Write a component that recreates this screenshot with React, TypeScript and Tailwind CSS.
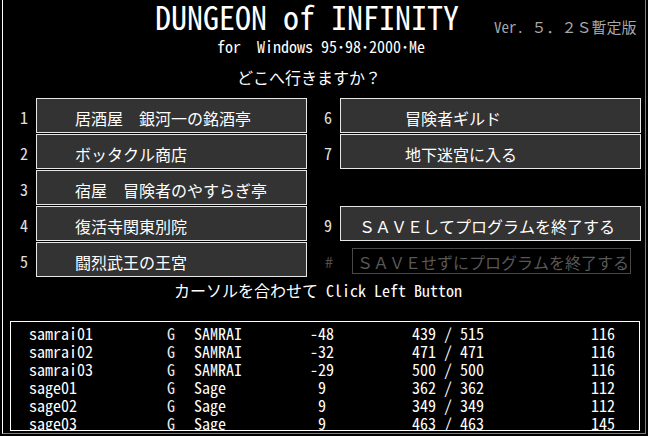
import React from "react";

const rows: { name: string; g: string; cls: string; al: string; hp: string; lv: string }[] = [
  { name: "samrai01", g: "G", cls: "SAMRAI", al: "-48", hp: "439 / 515", lv: "116" },
  { name: "samrai02", g: "G", cls: "SAMRAI", al: "-32", hp: "471 / 471", lv: "116" },
  { name: "samrai03", g: "G", cls: "SAMRAI", al: "-29", hp: "500 / 500", lv: "116" },
  { name: "sage01", g: "G", cls: "Sage", al: " 9", hp: "362 / 362", lv: "112" },
  { name: "sage02", g: "G", cls: "Sage", al: " 9", hp: "349 / 349", lv: "112" },
  { name: "sage03", g: "G", cls: "Sage", al: " 9", hp: "463 / 463", lv: "145" },
];

function Box({ w, pl, label }: { w: string; pl: string; label: string }) {
  return (
    <div
      className={`${w} h-[35px] shrink-0 border border-[#e8e8e8] bg-[#333333] flex items-center`}
    >
      <span className={`${pl} pt-[4px] text-[16px] leading-[16px] text-white whitespace-pre`}>{label}</span>
    </div>
  );
}

function Num({ n, cls = "text-[#e0e0e0]" }: { n: string; cls?: string }) {
  return (
    <span className={`w-[16px] shrink-0 flex items-center text-[16px] leading-[16px] pt-[2px] ${cls}`}>{n}</span>
  );
}

export default function App() {
  return (
    <div className="w-[648px] h-[436px] bg-black overflow-hidden font-['Noto_Sans_Mono_CJK_JP','Noto_Sans_CJK_JP','Liberation_Mono',monospace] text-white">
      <div className="ml-[2px] w-[644px] h-[434px] border-l border-l-white border-r border-r-[#808080] border-b border-b-[#808080] flex flex-col">
        {/* title row */}
        <div className="h-[36px] flex items-start shrink-0">
          <span className="ml-[152px] text-[32px] leading-[32px] whitespace-pre text-white">DUNGEON of INFINITY</span>
          <span className="ml-[35px] mt-[19px] text-[15px] leading-[15px] whitespace-pre text-[#a8a8a8]">Ver. ５．２Ｓ暫定版</span>
        </div>
        <div className="h-[20px] shrink-0 pl-[214px] text-[16px] leading-[20px] whitespace-pre">for  Windows 95･98･2000･Me</div>
        <div className="mt-[11px] h-[20px] shrink-0 pl-[234px] text-[16px] leading-[20px] whitespace-pre">どこへ行きますか？</div>

        {/* buttons */}
        <div className="mt-[11px] flex flex-col gap-[1px] shrink-0">
          <div className="flex h-[35px]">
            <div className="w-[17px] shrink-0" />
            <Num n="1" />
            <Box w="w-[271px]" pl="pl-[38px]" label="居酒屋　銀河一の銘酒亭" />
            <div className="w-[17px] shrink-0" />
            <Num n="6" />
            <Box w="w-[301px]" pl="pl-[64px]" label="冒険者ギルド" />
          </div>
          <div className="flex h-[35px]">
            <div className="w-[17px] shrink-0" />
            <Num n="2" />
            <Box w="w-[271px]" pl="pl-[38px]" label="ボッタクル商店" />
            <div className="w-[17px] shrink-0" />
            <Num n="7" />
            <Box w="w-[301px]" pl="pl-[64px]" label="地下迷宮に入る" />
          </div>
          <div className="flex h-[35px]">
            <div className="w-[17px] shrink-0" />
            <Num n="3" />
            <Box w="w-[271px]" pl="pl-[38px]" label="宿屋　冒険者のやすらぎ亭" />
          </div>
          <div className="flex h-[35px]">
            <div className="w-[17px] shrink-0" />
            <Num n="4" />
            <Box w="w-[271px]" pl="pl-[38px]" label="復活寺関東別院" />
            <div className="w-[17px] shrink-0" />
            <Num n="9" />
            <Box w="w-[301px]" pl="pl-[18px]" label="ＳＡＶＥしてプログラムを終了する" />
          </div>
          <div className="flex h-[35px]">
            <div className="w-[17px] shrink-0" />
            <Num n="5" />
            <Box w="w-[271px]" pl="pl-[38px]" label="闘烈武王の王宮" />
            <div className="w-[18px] shrink-0" />
            <Num n="#" cls="text-[#505050]" />
            <div className="ml-[11px] mt-[6px] w-[279px] h-[26px] border border-[#484848] flex items-center">
              <span className="pl-[4px] pt-[2px] text-[16px] leading-[16px] text-[#585858] whitespace-pre">ＳＡＶＥせずにプログラムを終了する</span>
            </div>
          </div>
        </div>

        <div className="mt-[3px] h-[20px] shrink-0 pl-[171px] text-[16px] leading-[20px] whitespace-pre">カーソルを合わせて Click Left Button</div>

        {/* party table */}
        <div className="mt-[21px] ml-[7px] w-[630px] h-[110px] shrink-0 border border-white overflow-hidden pt-[2px]">
          {rows.map((r) => (
            <div key={r.name} className="h-[18px] flex text-[16px] leading-[18px] whitespace-pre">
              <span className="ml-[18px] w-[138px] shrink-0">{r.name}</span>
              <span className="w-[27px] shrink-0 text-[#e8e8e8]">{r.g}</span>
              <span className="w-[116px] shrink-0">{r.cls}</span>
              <span className="w-[102px] shrink-0">{r.al}</span>
              <span className="w-[179px] shrink-0">{r.hp}</span>
              <span className="shrink-0">{r.lv}</span>
            </div>
          ))}
        </div>
      </div>
    </div>
  );
}
